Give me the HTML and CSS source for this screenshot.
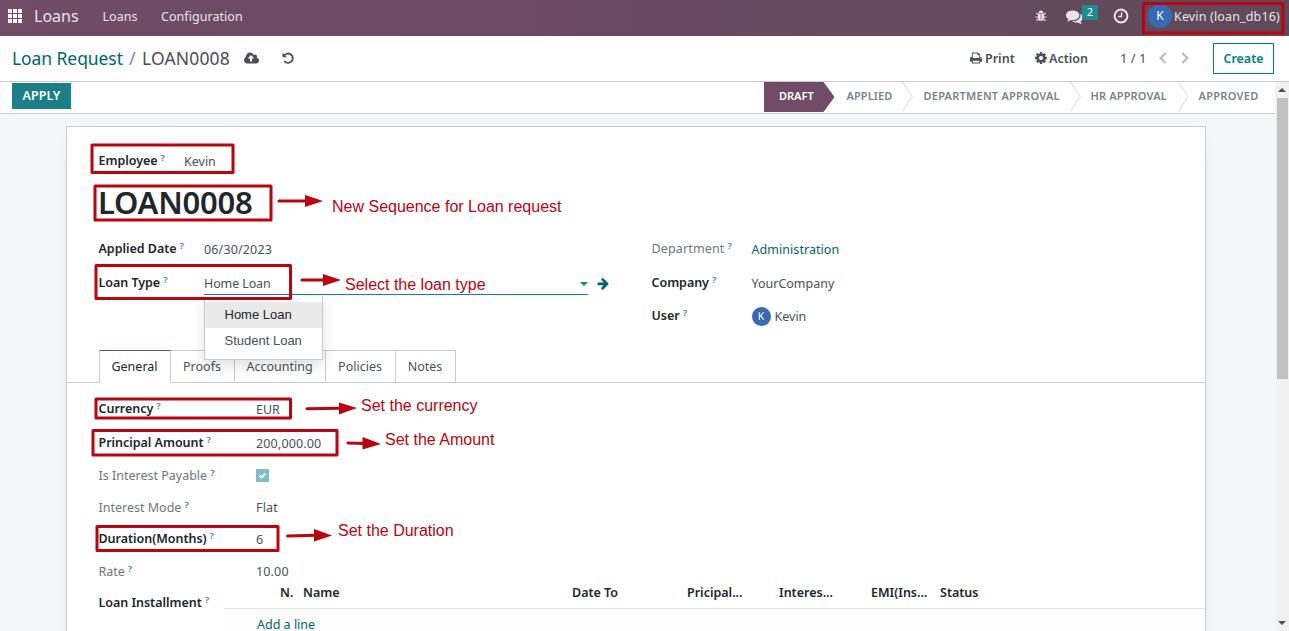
FILE: index.html
```
<!DOCTYPE html>
<html lang="en">
<head>
<meta charset="utf-8">
<title>LOAN0008 - Loans</title>
<link rel="stylesheet" href="styles.css">
</head>
<body>
<header class="navbar">
  <svg class="apps" viewBox="0 0 14 14"><path d="M0 0h4v4H0zM5 0h4v4H5zM10 0h4v4h-4zM0 5h4v4H0zM5 5h4v4H5zM10 5h4v4h-4zM0 10h4v4H0zM5 10h4v4H5zM10 10h4v4h-4z"/></svg>
  <span class="brand">Loans</span>
  <span class="menu menu-loans">Loans</span>
  <span class="menu">Configuration</span>
  <div class="systray">
    <svg class="bug" viewBox="0 0 12 12"><path d="M3.7 2.9a2.3 2.3 0 0 1 4.6 0zM3 3.5h2.7v7.7C4 11.100 3 9.800 3 7.800zM6.300 3.500H9v4.300c0 2-1 3.300-2.700 3.400z"/><path class="legs" d="M3.200 4.700 1.400 2.900M8.800 4.700l1.800-1.800M3 7H.3M9 7h2.700M3.300 8.900l-1.800 1.900M8.700 8.900l1.800 1.900"/></svg>
    <svg class="comments" viewBox="0 128 1792 1536"><path d="M1408 768q0 139-94 257t-256.500 186.500-353.500 68.500q-86 0-176-16-124 88-278 128-36 9-86 16h-3q-11 0-20.500-8t-11.500-21q-1-3-1-6.500t.5-6.500 2-6l2.500-5 3.500-5.500 4-5 4.500-5 4-4.500q5-6 23-25t26-29.500 22.500-29 25-38.500 20.500-44q-124-72-195-177t-71-224q0-139 94-257t256.500-186.500 353.500-68.500 353.500 68.500 256.500 186.500 94 257zm384 256q0 120-71 224.500t-195 176.500q10 24 20.500 44t25 38.500 22.500 29 26 29.500 23 25q1 1 4 4.500t4.500 5 4 5 3.500 5.500l2.500 5 2 6 .5 6.500-1 6.500q-3 14-13 22t-22 7q-50-7-86-16-154-40-278-128-90 16-176 16-271 0-472-132 58 4 88 4 161 0 309-45t264-129q125-92 192-212t67-254q0-77-23-152 129 71 204 178t75 230z"/></svg>
    <span class="badge">2</span>
    <svg class="clock" viewBox="0 0 16 16"><circle cx="8" cy="8" r="6.400"/><path d="M8.500 4.200v4.300H5.200"/></svg>
    <span class="avatar">K</span>
    <span class="username">Kevin (loan_db16)</span>
  </div>
</header>

<section class="control-panel">
  <a class="crumb-link">Loan Request</a><span class="slash">/</span><span class="crumb">LOAN0008</span>
  <svg class="cloud" viewBox="-64 256 1920 1280"><path d="M1216 864q0-14-9-23l-352-352q-9-9-23-9t-23 9l-351 351q-10 12-10 24 0 14 9 23t23 9h224v352q0 13 9.500 22.500t22.500 9.500h192q13 0 22.500-9.500t9.500-22.500v-352h224q13 0 22.500-9.500t9.500-22.500zm640 288q0 159-112.500 271.500t-271.500 112.500h-1088q-185 0-316.500-131.500t-131.500-316.500q0-130 70-240t188-165q-2-30-2-43 0-212 150-362t362-150q156 0 285.500 87t188.500 231q71-62 166-62 106 0 181 75t75 181q0 76-41 138 130 31 213.500 135.500t83.500 238.500z"/></svg>
  <svg class="undo" viewBox="0 0 12 12"><path class="arc" d="M2.300 3.400A4.700 4.700 0 1 1 2.300 9"/><path d="M.5.700v4.500H5z"/></svg>
  <div class="cp-right">
    <svg class="print" viewBox="0 128 1664 1536"><path d="M384 1536h896v-256h-896v256zm0-640h896v-384h-160q-40 0-68-28t-28-68v-160h-640v640zm1152 64q0-26-19-45t-45-19-45 19-19 45 19 45 45 19 45-19 19-45zm128 0v416q0 13-9.500 22.500t-22.500 9.500h-224v160q0 40-28 68t-68 28h-960q-40 0-68-28t-28-68v-160h-224q-13 0-22.500-9.500t-9.500-22.500v-416q0-79 56.500-135.500t135.500-56.500h64v-544q0-40 28-68t68-28h672q40 0 88 20t76 48l152 152q28 28 48 76t20 88v256h64q79 0 135.500 56.500t56.500 135.500z"/></svg>
    <span class="cp-action cp-print">Print</span>
    <svg class="cog" viewBox="0 128 1536 1536"><path d="M1024 896q0-106-75-181t-181-75-181 75-75 181 75 181 181 75 181-75 75-181zm512-109v222q0 12-8 23t-20 13l-185 28q-19 54-39 91 35 50 107 138 10 12 10 25t-9 23q-27 37-99 108t-94 71q-12 0-26-9l-138-108q-44 23-91 38-16 136-29 186-7 28-36 28h-222q-14 0-24.500-8.500t-11.500-21.500l-28-184q-49-16-90-37l-141 107q-10 9-25 9-14 0-25-11-126-114-165-168-7-10-7-23 0-12 8-23 15-21 51-66.500t54-70.500q-27-50-41-99l-183-27q-13-2-21-12.500t-8-23.500v-222q0-12 8-23t19-13l186-28q14-46 39-92-40-57-107-138-10-12-10-24 0-10 9-23 26-36 98.500-107.500t94.500-71.500q13 0 26 10l138 107q44-23 91-38 16-136 29-186 7-28 36-28h222q14 0 24.500 8.500t11.500 21.500l28 184q49 16 90 37l142-107q9-9 24-9 13 0 25 10 129 119 165 170 7 8 7 22 0 12-8 23-15 21-51 66.500t-54 70.500q26 50 41 98l183 28q13 2 21 12.500t8 23.500z"/></svg>
    <span class="cp-action cp-act">Action</span>
    <span class="pager">1 / 1</span>
    <svg class="chevron" viewBox="0 0 8 12"><path d="M6.700 1 1.700 6l5 5"/></svg>
    <svg class="chevron next" viewBox="0 0 8 12"><path d="m1.300 1 5 5-5 5"/></svg>
    <button class="create">Create</button>
  </div>
</section>

<div class="content">
  <main class="form-view">
    <div class="statusbar">
      <button class="apply">APPLY</button>
      <ol class="steps">
        <li class="step current">DRAFT</li>
        <li class="step applied">APPLIED<svg viewBox="0 0 11 30"><path d="M.5 0 10 14.500.5 29.500"/></svg></li>
        <li class="step dept">DEPARTMENT APPROVAL<svg viewBox="0 0 11 30"><path d="M.5 0 10 14.500.5 29.500"/></svg></li>
        <li class="step hr">HR APPROVAL<svg viewBox="0 0 11 30"><path d="M.5 0 10 14.500.5 29.500"/></svg></li>
        <li class="step last">APPROVED</li>
      </ol>
    </div>
    <div class="sheet">
      <div class="employee">
        <label class="label req emp">Employee<sup>?</sup></label><span class="value">Kevin</span>
      </div>
      <h1 class="title">LOAN0008</h1>
      <div class="groups">
        <div class="group left">
          <label class="label req">Applied Date<sup>?</sup></label><span class="value num">06/30/2023</span>
          <label class="label req">Loan Type<sup>?</sup></label>
          <div class="select">
            <div class="input"><span class="value v-home">Home Loan</span><i class="caret"></i></div>
            <svg class="goto" viewBox="192 192 1472 1560"><path d="M1600 960q0 54-37 91l-651 651q-39 37-91 37-51 0-90-37l-75-75q-38-38-38-91t38-91l293-293h-704q-52 0-84.500-37.500t-32.500-90.500v-128q0-53 32.500-90.500t84.500-37.500h704l-293-294q-38-36-38-90t38-90l75-75q38-38 90-38 53 0 91 38l651 651q37 35 37 90z"/></svg>
            <ul class="dropdown"><li class="option active">Home Loan</li><li class="option">Student Loan</li></ul>
          </div>
        </div>
        <div class="group right">
          <label class="label l-dep">Department<sup>?</sup></label><span class="value link v-adm">Administration</span>
          <label class="label req">Company<sup>?</sup></label><span class="value">YourCompany</span>
          <label class="label req">User<sup>?</sup></label><span class="value user"><span class="avatar small">K</span>Kevin</span>
        </div>
      </div>
      <nav class="tabs">
        <span class="tab active t1">General</span><span class="tab t2">Proofs</span><span class="tab t3">Accounting</span><span class="tab t4">Policies</span><span class="tab t5">Notes</span>
      </nav>
      <div class="page">
        <div class="row tall"><label class="label req">Currency<sup>?</sup></label><span class="value">EUR</span></div>
        <div class="row medium"><label class="label req">Principal Amount<sup>?</sup></label><span class="value num">200,000.00</span></div>
        <div class="row short"><label class="label">Is Interest Payable<sup>?</sup></label><span class="check"><svg viewBox="0 0 13 13"><path d="m3.500 6.500 2 2 4-4"/></svg></span></div>
        <div class="row"><label class="label">Interest Mode<sup>?</sup></label><span class="value num">Flat</span></div>
        <div class="row"><label class="label req">Duration(Months)<sup>?</sup></label><span class="value">6</span></div>
        <div class="row"><label class="label">Rate<sup>?</sup></label><span class="value num">10.00</span></div>
        <div class="installments">
          <label class="label req l-inst">Loan Installment<sup>?</sup></label>
          <div class="list">
            <div class="list-head"><span>N.</span><span>Name</span><span>Date To</span><span>Pricipal...</span><span>Interes...</span><span>EMI(Ins...</span><span>Status</span></div>
            <div class="list-add"><a class="link">Add a line</a></div>
          </div>
        </div>
      </div>
    </div>
  </main>
  <div class="scrollbar"><i class="up"></i><div class="thumb"></div><i class="down"></i></div>
</div>

<div class="annotations">
  <svg class="marks" viewBox="0 0 1289 631">
    <g class="boxes">
      <rect x="1143.500" y="3.500" width="139.500" height="29.500"/>
      <rect x="92" y="145" width="141" height="27.500"/>
      <rect x="95" y="186" width="176" height="34"/>
      <rect x="96" y="265.500" width="194.500" height="33"/>
      <rect x="96" y="399" width="194.500" height="19"/>
      <rect x="93" y="430.500" width="244" height="24.500"/>
      <rect x="97" y="526.500" width="181" height="24"/>
    </g>
    <g class="lines"><path d="M279 201h28M302 280h22M307 408.800l34-.6M348 443l17 .4M287.500 536l29-.8"/></g>
    <g class="heads"><path d="M305 195v12l18-6zM323 274v12l18-6zM339 402.500v12l18-6.500zM362.500 437v12.500l18.500-5.500zM314 529v12.500l18-6z"/></g>
  </svg>
  <span class="note n1">New Sequence for Loan request</span>
  <span class="note n2">Select the loan type</span>
  <span class="note n3">Set the currency</span>
  <span class="note n4">Set the Amount</span>
  <span class="note n5">Set the Duration</span>
</div>
</body>
</html>
```
FILE: styles.css
```
* { box-sizing: border-box; }
body {
  margin: 0;
  width: 1289px;
  height: 631px;
  overflow: hidden;
  position: relative;
  display: flex;
  flex-direction: column;
  background: #fff;
  color: #495057;
  font: 13px/20px "Noto Sans", "Open Sans", sans-serif;
  white-space: nowrap;
}
svg { display: block; flex: none; fill: currentColor; overflow: visible; }
button { font: inherit; padding: 0; border: 0; border-radius: 0; }

/* Top navigation */
.navbar {
  flex: none;
  height: 36px;
  display: flex;
  align-items: center;
  padding: 0 9px 4px 8px;
  background: linear-gradient(90deg, #714b67, #5f4a59);
  color: #e9e3e8;
}
.apps { width: 14px; height: 14px; color: #fff; }
.brand { margin-left: 12px; width: 69px; font-size: 16px; }
.menu { font-size: 12.500px; margin-top: 2px; letter-spacing: .05px; }
.menu-loans { width: 58px; margin-left: -.5px; margin-right: .5px; }
.systray { margin-left: auto; display: flex; align-items: center; }
.bug { width: 12px; height: 12px; }
.legs { fill: none; stroke: currentColor; stroke-width: 1.200; }
.comments { width: 17px; height: 15px; margin-left: 19px; }
.badge {
  width: 16px; height: 15px; margin: 0 15px 7px -1px;
  background: #1d8d94; color: #fff; font-size: 10.500px; line-height: 15px; text-align: center;
}
.clock { width: 16px; height: 16px; fill: none; stroke: currentColor; stroke-width: 2; margin-right: 19px; }
.clock path { stroke-width: 1.300; }
.avatar {
  width: 24px; height: 24px; border-radius: 50%; background: #3869b4; color: #fff;
  font-size: 12px; line-height: 24px; text-align: center;
}
.username { margin: 2px 0 0 2px; width: 106px; font-size: 12.500px; letter-spacing: .15px; }

/* Breadcrumb and actions */
.control-panel {
  flex: none;
  height: 46px;
  display: flex;
  align-items: center;
  padding: 0 15px 1px 12px;
  border-bottom: 1px solid #c9cccf;
  font-size: 18px;
}
.crumb-link { width: 117px; color: #01666b; font-size: 17.500px; letter-spacing: -.08px; }
.slash { width: 13px; color: #868c93; }
.crumb { width: 102px; font-size: 17.500px; letter-spacing: .15px; }
.cloud { width: 15px; height: 11px; }
.undo { width: 12px; height: 12px; margin-left: 23px; }
.arc { fill: none; stroke: currentColor; stroke-width: 1.800; }
.cp-right { margin-left: auto; display: flex; align-items: center; font-size: 13px; }
.print { width: 12px; height: 12px; margin-right: 3px; }
.cog { width: 12px; height: 12px; margin-right: 2px; }
.cp-action { font-weight: 600; font-size: 12.500px; margin-top: 2px; }
.cp-print { width: 50px; }
.cp-act { width: 71px; }
.pager { width: 39px; }
.chevron { width: 8px; height: 12px; fill: none; stroke: #b9bcc2; stroke-width: 2.300; }
.next { margin: 0 24px 0 14px; }
.create {
  width: 61px; height: 31px; border: 1px solid #017e84; background: #fff; padding-top: 2px;
  color: #017e84; font-weight: 600; font-size: 12.500px;
}

/* Scrolling form area */
.content { flex: 1; min-height: 0; display: flex; }
.form-view { width: 1275px; background: #f5f6fa; overflow: hidden; }
.statusbar {
  height: 32px; display: flex; justify-content: space-between; align-items: flex-start;
  padding-left: 12px; background: #fff; border-bottom: 1px solid #c9cccf;
}
.apply { width: 59px; height: 26px; margin-top: 1px; background: #1a7f86; color: #fff; font-weight: 600; font-size: 12.500px; }
.steps { list-style: none; margin: 0; padding: 0; display: flex; font-size: 11px; line-height: 28px; font-weight: 600; color: #7b828a; }
.step { height: 30px; position: relative; }
.current {
  width: 71px; padding-left: 15.500px; background: #714b67; color: #fff;
  clip-path: polygon(0 0, 60px 0, 100% 50%, 60px 100%, 0 100%);
}
.step svg { position: absolute; right: 0; top: 0; width: 11px; height: 30px; fill: none; stroke: #d5d8dc; }
.applied { width: 78px; padding-left: 12px; letter-spacing: .1px; }
.dept { width: 168px; padding-left: 11px; letter-spacing: .24px; }
.hr { width: 108px; padding-left: 10px; letter-spacing: .15px; }
.last { width: 86.500px; padding-left: 10px; letter-spacing: .3px; }
.sheet {
  width: 1140px; height: 540px; margin: 12px 0 0 66px; padding-top: 25px;
  background: #fff; border: 1px solid #c9cccf; box-shadow: 0 5px 20px -15px rgba(0, 0, 0, .4);
}
.label { color: #70757a; font-size: 12.500px; margin-left: -.5px; }
.req { color: #20262c; font-weight: 600; letter-spacing: -.03px; }
.l-dep { letter-spacing: .15px; }
.label sup { margin-left: 3px; color: #2f8a8f; font-size: 9.500px; font-weight: 600; line-height: 0; vertical-align: 4px; letter-spacing: 0; }
.value { font-size: 12.500px; }
.num { letter-spacing: .15px; }
.v-home { letter-spacing: -.12px; }
.v-adm { letter-spacing: .05px; }
.link { color: #01666b; }
.employee { height: 20px; display: flex; padding-left: 32px; }
.emp { width: 85.500px; margin-top: -1px; }
.title { margin: 10px 0 0 31px; height: 40px; font-size: 31px; line-height: 40px; font-weight: 600; letter-spacing: -.25px; color: #20262c; }
.groups { display: flex; height: 131px; padding: 18px 0 0 32px; }
.group { display: grid; align-content: start; }
.group .label { margin-top: -1px; }
.left { grid-template-columns: 105px 1fr; grid-template-rows: 34px 33px; width: 553px; }
.right { grid-template-columns: 99.500px 1fr; grid-template-rows: 34px 33px 30px; }
.select { position: relative; display: flex; align-items: flex-start; }
.input { width: 384px; height: 21px; border-bottom: 1px solid #1a7f86; display: flex; align-items: center; justify-content: space-between; }
.caret { border: 4px solid transparent; border-top-color: #1a7f86; border-bottom: 0; }
.goto { width: 11px; height: 12px; margin: 4px 0 0 10px; color: #01666b; }
.dropdown {
  position: absolute; z-index: 2; left: 0; top: 22px; width: 119px; height: 64px; margin: 0; padding: 6px 0;
  list-style: none; background: #fff; border: 1px solid #c9cccf; border-top: 0; box-shadow: 0 6px 12px rgba(0, 0, 0, .12);
}
.option { height: 26px; padding-left: 19.500px; font: 13px/26px "Liberation Sans", Arial, sans-serif; color: #495057; }
.option.active { background: #e9e9e9; color: #20262c; }
.user { display: flex; align-items: center; height: 20px; gap: 4px; }
.small { width: 19px; height: 19px; line-height: 19px; margin-bottom: 1px; font-size: 10.500px; }
.tabs { display: flex; height: 33px; margin-top: -3px; padding-left: 32px; border-bottom: 1px solid #c9cccf; }
.tab { height: 32px; border: 1px solid #c9cccf; border-width: 1px 1px 0 0; text-align: center; line-height: 31px; font-size: 12.500px; padding-right: 1px; }
.tab.active { height: 33px; border-left-width: 1px; border-top-color: #714b67; background: #fff; color: #20262c; }
.t1 { width: 72px; } .t2 { width: 64px; } .t3 { width: 91px; } .t4 { width: 70px; } .t5 { width: 60px; }
.page { padding: 17px 0 0 32px; }
.row { display: grid; grid-template-columns: 157px 1fr; height: 32px; }
.row .req { margin-top: -1px; }
.tall { height: 34px; }
.medium { height: 33px; }
.short { height: 31px; }
.short .label { margin-top: -1px; }
.check { width: 13px; height: 13px; margin-top: 2px; background: #80bfc2; }
.check svg { width: 13px; height: 13px; fill: none; stroke: #fff; stroke-width: 1.800; }
.installments { display: grid; grid-template-columns: 125px 981px; }
.l-inst { margin-top: -1px; }
.list { margin-top: -11px; }
.list-head {
  height: 26px; padding-left: 56px; display: grid;
  grid-template-columns: 23px 269px 115px 92px 92px 69px 1fr;
  font-weight: 600; font-size: 12.500px; line-height: 20px; color: #20262c; border-bottom: 1px solid #dee2e6;
}
.list-add { height: 40px; padding: 6px 0 0 33px; background: #fcfcfc; font-size: 12.500px; }
.scrollbar { width: 14px; background: #f1f1f1; display: flex; flex-direction: column; align-items: center; padding: 6px 0; }
.up, .down { border: 4px solid transparent; }
.up { border-bottom-color: #505050; border-top: 0; }
.down { border-top-color: #505050; border-bottom: 0; margin-top: auto; }
.thumb { width: 11px; height: 281px; margin-top: 6px; margin-left: 1px; background: #c1c1c1; }

/* Callouts drawn over the form */
.annotations { position: absolute; z-index: 5; inset: 0; color: #bb0411; }
.marks { position: absolute; left: 0; top: 0; width: 1289px; height: 631px; }
.boxes, .lines { fill: none; stroke: currentColor; stroke-width: 3; stroke-linejoin: round; stroke-linecap: round; }
.note { position: absolute; font: 16px/20px "Liberation Sans", Arial, sans-serif; }
.n1 { left: 332px; top: 197px; }
.n2 { left: 345px; top: 275px; }
.n3 { left: 361px; top: 396px; }
.n4 { left: 385px; top: 430px; }
.n5 { left: 338px; top: 521px; }
```
